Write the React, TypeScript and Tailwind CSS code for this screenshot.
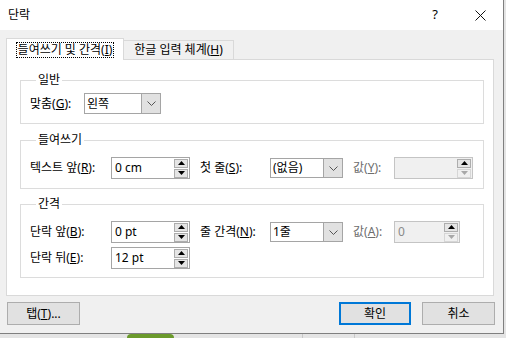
import React from 'react'

const font = "font-['Noto_Sans','Noto_Sans_CJK_KR',sans-serif]"

function Arrow({ up, disabled }: { up?: boolean; disabled?: boolean }) {
  return (
    <svg width="7" height="4" viewBox="0 0 7 4" className="block">
      <path
        d={up ? 'M0 4 L3.5 0 L7 4 Z' : 'M0 0 L3.5 4 L7 0 Z'}
        fill={disabled ? '#a8a8a8' : '#000'}
      />
    </svg>
  )
}

function Spin({ value, width, disabled }: { value: string; width: string; disabled?: boolean }) {
  return (
    <div
      className={`flex h-[22px] items-center border ${width} ${
        disabled ? 'border-[#c4c4c4] bg-[#f0f0f0] text-[#8a8a8a]' : 'border-[#a5a5a5] bg-white text-black'
      }`}
    >
      <span className="flex-1 pl-[3px] leading-none">{value}</span>
      <div className="mr-[1px] flex flex-col gap-[1px]">
        <div className="flex h-[9px] w-[14px] items-center justify-center border border-[#adadad] bg-[#e5e5e5]">
          <Arrow up />
        </div>
        <div
          className={`flex h-[9px] w-[14px] items-center justify-center border ${
            disabled ? 'border-[#d6d6d6] bg-[#f0f0f0]' : 'border-[#adadad] bg-[#e5e5e5]'
          }`}
        >
          <Arrow disabled={disabled} />
        </div>
      </div>
    </div>
  )
}

function Combo({ value, width, h = 'h-[21px]' }: { value: string; width: string; h?: string }) {
  return (
    <div className={`flex ${h} ${width} items-stretch border border-[#a5a5a5] bg-white`}>
      <span className="flex flex-1 items-center pl-[2px] leading-none">{value}</span>
      <div className="flex w-[19px] items-center justify-center border-l border-[#a5a5a5] bg-[#e1e1e1]">
        <svg width="9" height="5" viewBox="0 0 9 5">
          <path d="M0.5 0.5 L4.5 4.5 L8.5 0.5" stroke="#555" fill="none" strokeWidth="1" />
        </svg>
      </div>
    </div>
  )
}

function Group({ title, className, children }: { title: string; className: string; children: React.ReactNode }) {
  return (
    <fieldset className={`border border-[#dcdcdc] pl-[9px] ${className}`}>
      <legend className="ml-[6px] px-[2px] leading-[16px]">{title}</legend>
      {children}
    </fieldset>
  )
}

export default function App() {
  return (
    <div className={`relative flex h-[338px] w-[506px] flex-col overflow-hidden bg-[#e4e4e4] text-[12px] text-black ${font}`}>
      <div className="flex h-[334px] w-[504px] flex-col border-r border-b border-[#7f7f7f] bg-[#f0f0f0]">
        {/* title bar */}
        <div className="flex h-[30px] items-center bg-white">
          <span className="ml-[8px] text-[12px]">단락</span>
          <span className="ml-auto text-[13px]">?</span>
          <svg width="11" height="11" viewBox="0 0 11 11" className="ml-[37px] mr-[17px]">
            <path d="M0.5 0.5 L10.5 10.5 M10.5 0.5 L0.5 10.5" stroke="#111" strokeWidth="1" />
          </svg>
        </div>

        {/* tabs */}
        <div className="mt-[8px] flex items-end pl-[6px]">
          <div className="relative z-10 -mb-[1px] flex h-[22px] w-[118px] items-center justify-center border border-b-0 border-[#d9d9d9] bg-white">
            <span className="border border-dotted border-black px-[1px] leading-[14px]">
              들여쓰기 및 간격(<u>I</u>)
            </span>
          </div>
          <div className="flex h-[19px] w-[110px] items-center justify-center border border-b-0 border-l-0 border-[#d9d9d9] bg-[#f0f0f0]">
            한글 입력 체계(<u>H</u>)
          </div>
        </div>

        {/* panel */}
        <div className="mx-[6px] flex h-[237px] w-[488px] flex-col border border-[#d9d9d9] bg-white pt-[12px] pr-[9px] pl-[13px]">
          <Group title="일반" className="pt-[5px] pb-[9px]">
            <div className="flex items-center">
              <span className="w-[54px]">
                맞춤(<u>G</u>):
              </span>
              <Combo value="왼쪽" width="w-[77px]" />
            </div>
          </Group>

          <Group title="들여쓰기" className="mt-[8px] pt-[9px] pb-[9px]">
            <div className="flex items-center">
              <span className="w-[81px]">
                텍스트 앞(<u>R</u>):
              </span>
              <Spin value="0 cm" width="w-[79px]" />
              <span className="ml-[10px] w-[70px]">
                첫 줄(<u>S</u>):
              </span>
              <Combo value="(없음)" width="w-[73px]" h="h-[20px]" />
              <span className="ml-[10px] w-[41px] text-[#6d6d6d]">
                값(<u>Y</u>):
              </span>
              <Spin value="" width="w-[79px]" disabled />
            </div>
          </Group>

          <Group title="간격" className="mt-[7px] pt-[9px] pb-[8px]">
            <div className="flex flex-col gap-[4px]">
              <div className="flex items-center">
                <span className="w-[81px]">
                  단락 앞(<u>B</u>):
                </span>
                <Spin value="0 pt" width="w-[79px]" />
                <span className="ml-[10px] w-[70px]">
                  줄 간격(<u>N</u>):
                </span>
                <Combo value="1줄" width="w-[73px]" h="h-[20px]" />
                <span className="ml-[10px] w-[41px] text-[#6d6d6d]">
                  값(<u>A</u>):
                </span>
                <Spin value="0" width="w-[66px]" disabled />
              </div>
              <div className="flex items-center">
                <span className="w-[81px]">
                  단락 뒤(<u>E</u>):
                </span>
                <Spin value="12 pt" width="w-[79px]" />
              </div>
            </div>
          </Group>
        </div>

        {/* buttons */}
        <div className="mt-[6px] flex items-center px-[7px]">
          <button className="flex h-[23px] w-[73px] items-center justify-center border border-[#adadad] bg-[#e1e1e1]">
            탭(<u>T</u>)...
          </button>
          <button className="ml-auto flex h-[23px] w-[72px] items-center justify-center border-2 border-[#0078d7] bg-[#e1e1e1]">
            확인
          </button>
          <button className="ml-[11px] mr-[1px] flex h-[23px] w-[73px] items-center justify-center border border-[#adadad] bg-[#e1e1e1]">
            취소
          </button>
        </div>
      </div>

      {/* background peeking below */}
      <div className="flex h-[4px]">
        <div className="ml-[127px] w-[47px] rounded-t-full bg-[#6b9a2c]" />
        <div className="ml-[128px] w-px bg-[#c8c8c8]" />
        <div className="ml-[51px] w-px bg-[#c8c8c8]" />
      </div>
    </div>
  )
}
